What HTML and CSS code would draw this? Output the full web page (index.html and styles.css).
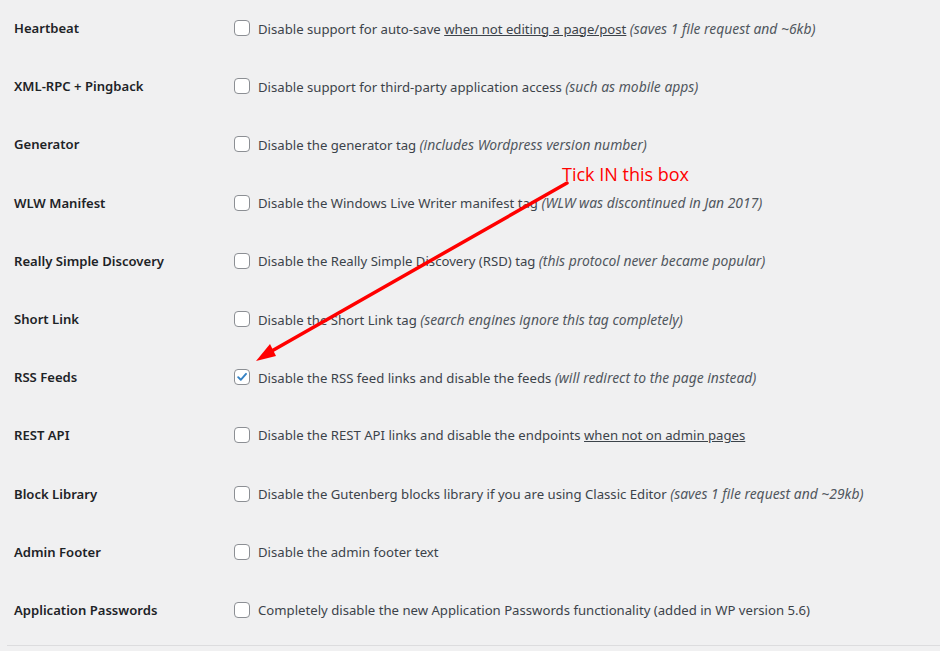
FILE: index.html
```html
<!DOCTYPE html>
<html>
<head>
<meta charset="utf-8">
<link rel="stylesheet" href="styles.css">
</head>
<body>
<div class="page">
  <div class="rows">
    <div class="row"><div class="label">Heartbeat</div><div class="field"><span class="cb"></span><span class="desc">Disable support for auto-save <u>when not editing a page/post</u> <em>(saves 1 file request and ~6kb)</em></span></div></div>
    <div class="row"><div class="label">XML-RPC + Pingback</div><div class="field"><span class="cb"></span><span class="desc">Disable support for third-party application access <em>(such as mobile apps)</em></span></div></div>
    <div class="row"><div class="label">Generator</div><div class="field"><span class="cb"></span><span class="desc">Disable the generator tag <em>(includes Wordpress version number)</em></span></div></div>
    <div class="row"><div class="label">WLW Manifest</div><div class="field"><span class="cb"></span><span class="desc">Disable the Windows Live Writer manifest tag <em>(WLW was discontinued in Jan 2017)</em></span></div></div>
    <div class="row"><div class="label">Really Simple Discovery</div><div class="field"><span class="cb"></span><span class="desc">Disable the Really Simple Discovery (RSD) tag <em>(this protocol never became popular)</em></span></div></div>
    <div class="row"><div class="label">Short Link</div><div class="field"><span class="cb"></span><span class="desc">Disable the Short Link tag <em>(search engines ignore this tag completely)</em></span></div></div>
    <div class="row"><div class="label">RSS Feeds</div><div class="field"><span class="cb checked"><svg viewBox="0 0 16 16" width="16" height="16"><path d="M3.6 8.2 L6.6 11.2 L12.6 4.4" fill="none" stroke="#3582c4" stroke-width="2.2" stroke-linecap="round" stroke-linejoin="round"/></svg></span><span class="desc">Disable the RSS feed links and disable the feeds <em>(will redirect to the page instead)</em></span></div></div>
    <div class="row"><div class="label">REST API</div><div class="field"><span class="cb"></span><span class="desc">Disable the REST API links and disable the endpoints <u>when not on admin pages</u></span></div></div>
    <div class="row"><div class="label">Block Library</div><div class="field"><span class="cb"></span><span class="desc">Disable the Gutenberg blocks library if you are using Classic Editor <em>(saves 1 file request and ~29kb)</em></span></div></div>
    <div class="row"><div class="label">Admin Footer</div><div class="field"><span class="cb"></span><span class="desc">Disable the admin footer text</span></div></div>
    <div class="row"><div class="label">Application Passwords</div><div class="field"><span class="cb"></span><span class="desc">Completely disable the new Application Passwords functionality (added in WP version 5.6)</span></div></div>
  </div>
  <div class="divider"></div>

  <div class="annotation">
    <span class="note">Tick IN this box</span>
    <svg class="arrow" width="940" height="651" viewBox="0 0 940 651">
      <line x1="567" y1="183" x2="270" y2="352" stroke="#ff0000" stroke-width="3.5" stroke-linecap="round"/>
      <polygon points="256,361 270,344 276,356" fill="#ff0000"/>
    </svg>
  </div>
</div>
</body>
</html>
```
FILE: styles.css
```css
html, body {
  margin: 0;
  padding: 0;
  background: #f0f0f1;
}
.page {
  position: relative;
  width: 940px;
  height: 651px;
  overflow: hidden;
  font-family: "Noto Sans", "Open Sans", sans-serif;
  font-size: 13.17px;
  color: #3c434a;
}
.rows {
  display: flex;
  flex-direction: column;
  padding-left: 14px;
  margin-top: -1px;
}
.row {
  display: flex;
  align-items: center;
  height: 58.2px;
}
.label {
  width: 220px;
  flex: none;
  font-weight: 600;
  color: #1d2327;
  font-size: 13.1px;
}
.field {
  display: flex;
  align-items: center;
  gap: 8px;
}
.cb {
  width: 14px;
  height: 14px;
  border: 1px solid #8c8f94;
  border-radius: 4px;
  background: #fff;
  flex: none;
  display: flex;
  align-items: center;
  justify-content: center;
}
.cb svg {
  display: block;
  width: 14px;
  height: 14px;
}
.desc {
  white-space: nowrap;
}
.desc em {
  font-style: italic;
  font-size: 1.055em;
  color: #50575e;
}
.desc u {
  text-decoration: underline;
}
.divider {
  margin: 6px 0 0 7px;
  height: 1px;
  background: #dcdcde;
}
.annotation {
  position: absolute;
  left: 0;
  top: 0;
  width: 940px;
  height: 651px;
  pointer-events: none;
}
.note {
  position: absolute;
  left: 562px;
  top: 162px;
  color: #ff0000;
  font-family: "Open Sans", sans-serif;
  font-size: 18px;
  font-weight: 400;
}
.arrow {
  position: absolute;
  left: 0;
  top: 0;
}
```
